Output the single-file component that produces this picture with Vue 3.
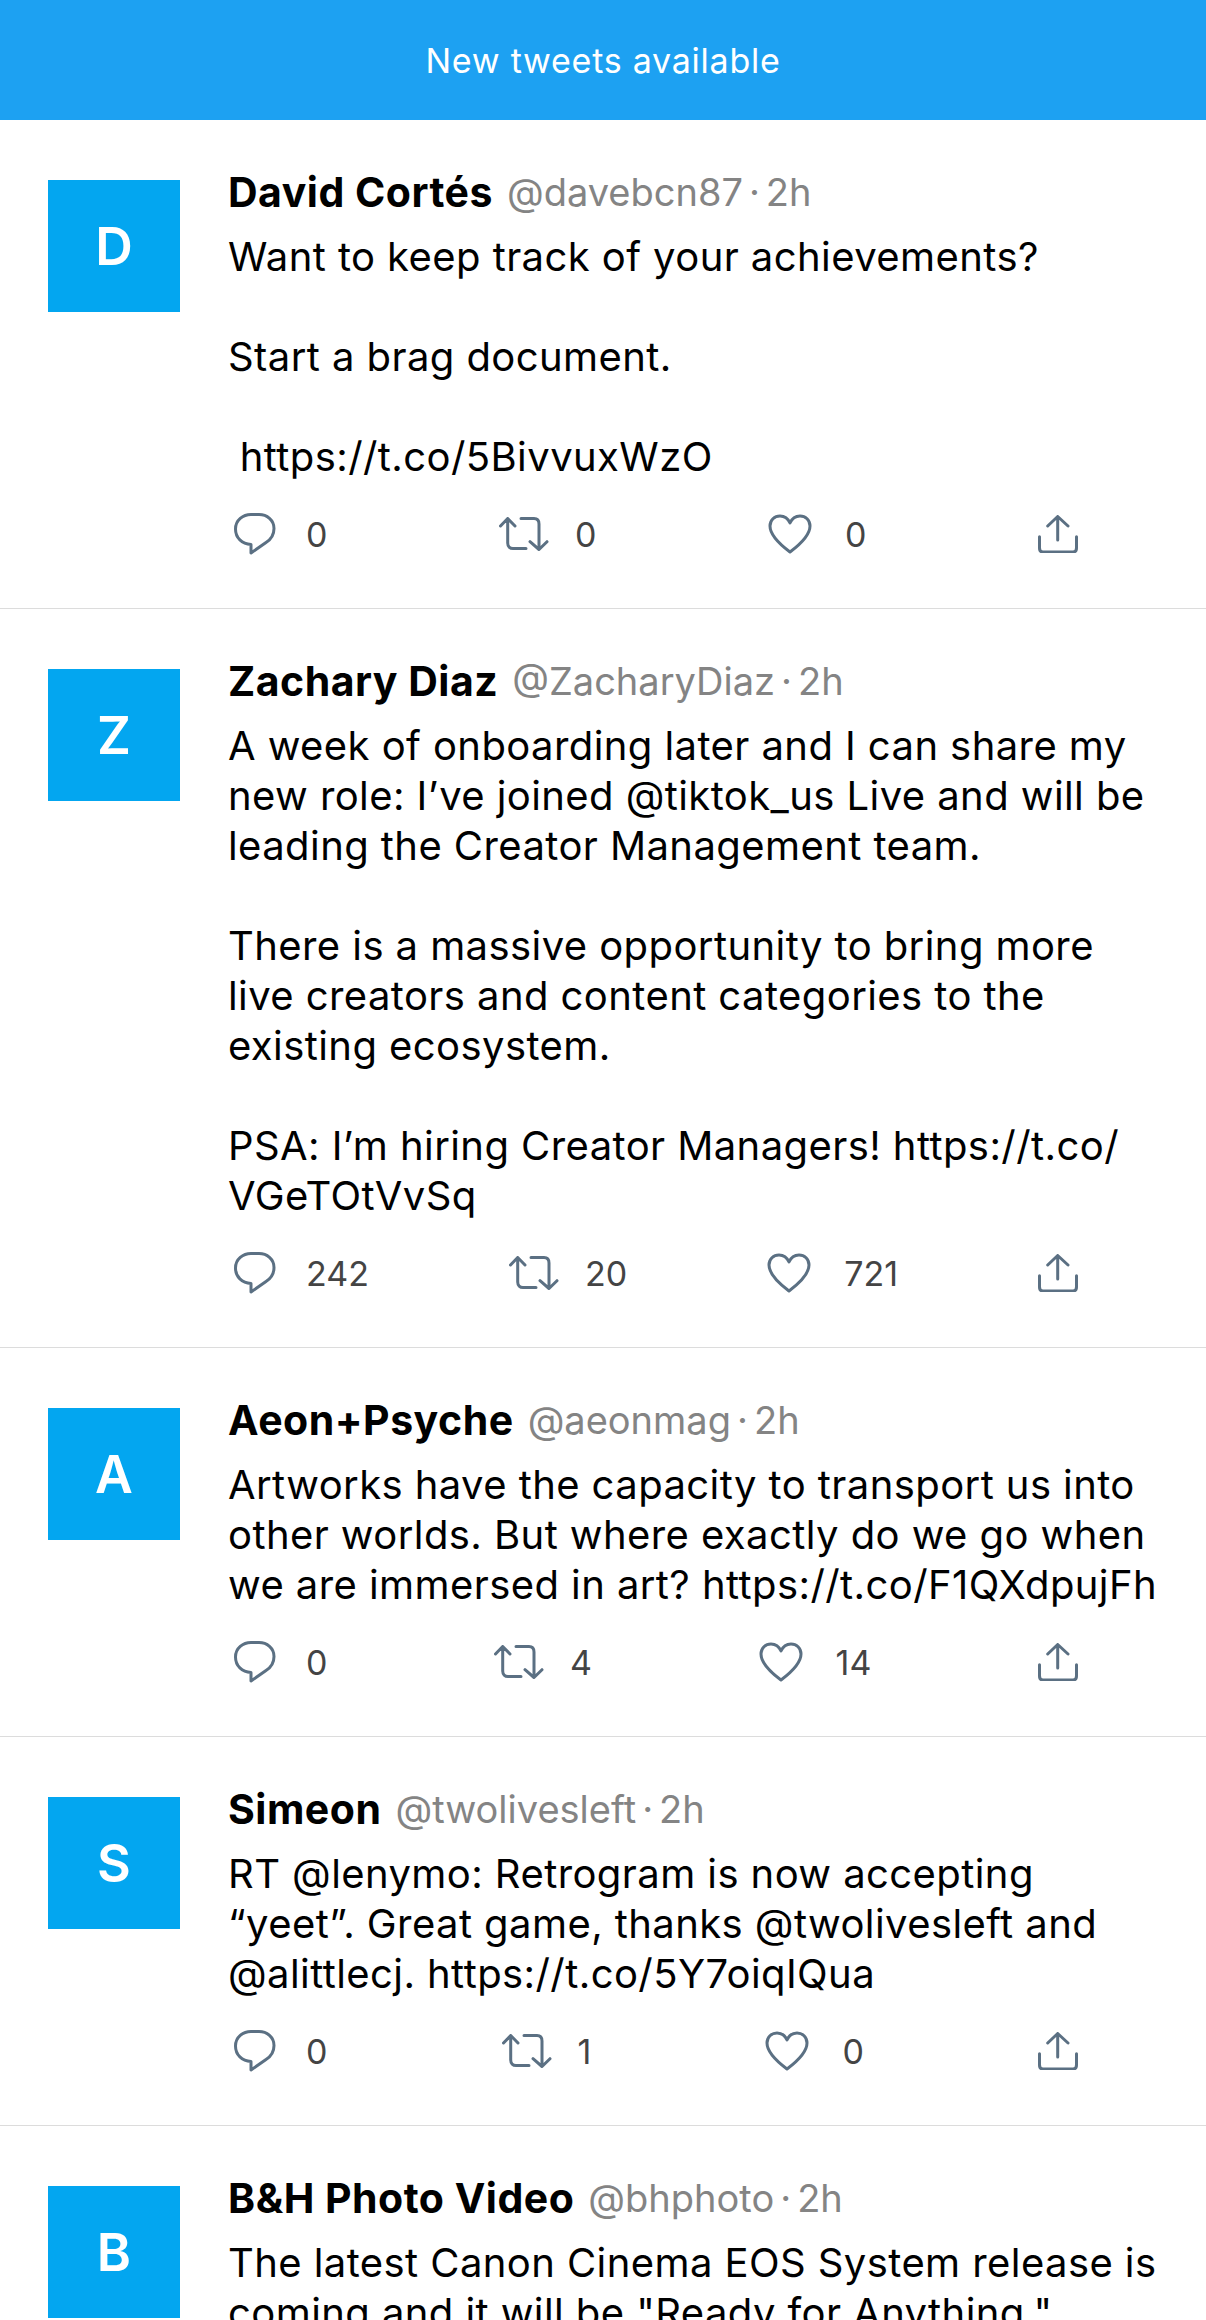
<template>
  <div class="page">
    <div class="banner">New tweets available</div>
    <div v-for="tweet in tweets" :key="tweet.handle" class="tweet">
      <div class="avatar">{{ tweet.name[0] }}</div>
      <div class="content">
        <div class="meta">
          <span class="name">{{ tweet.name }}</span>
          <span class="handle">@{{ tweet.handle }}</span>
          <span class="dot">·</span>
          <span class="time">2h</span>
        </div>
        <div class="body">{{ tweet.text }}</div>
        <div class="actions">
          <div class="action">
            <svg class="icon reply" width="42" height="42" viewBox="0 0 42 42">
              <path d="M17 31.5C8 31 1.5 25 1.5 16C1.5 7 9 1.5 17 1.5H25C33 1.5 40 7 40 15.5C40 22 36 27 32 29.5L17 40Z" />
            </svg>
            <span class="count">{{ tweet.replies }}</span>
          </div>
          <div class="action action-retweet">
            <svg class="icon retweet" width="50" height="34" viewBox="0 0 50 34">
              <path d="M1.5 9L8.7 1.5L16 9M8.7 2V26C8.7 29.5 11 31.5 14 31.5H27M22 1.5H35C38 1.5 40 3.5 40 7V32M31 24.7L40 32.5L48 24.7" />
            </svg>
            <span class="count">{{ tweet.retweets }}</span>
          </div>
          <div class="action action-like">
            <svg class="icon like" width="44" height="40" viewBox="0 0 44 40">
              <path d="M22 38C14 32 2 22 2 12C2 6 6.5 2 12 2C16.5 2 20 4.5 22 9C24 4.5 27.5 2 32 2C37.5 2 42 6 42 12C42 22 30 32 22 38Z" />
            </svg>
            <span class="count">{{ tweet.likes }}</span>
          </div>
          <div class="action">
            <svg class="icon share" width="40" height="38" viewBox="0 0 40 38">
              <path d="M9.7 11L19.7 1.5L30 11M19.7 2V25M1.5 21.7V33C1.5 35.5 3 37 5 37H35C37 37 38.5 35.5 38.5 33V21.7" />
            </svg>
          </div>
        </div>
      </div>
    </div>
  </div>
</template>

<script setup>
const tweets = [
  {
    name: 'David Cortés',
    handle: 'davebcn87',
    text: 'Want to keep track of your achievements?\n\nStart a brag document.\n\n https://t.co/5BivvuxWzO',
    replies: 0,
    retweets: 0,
    likes: 0,
  },
  {
    name: 'Zachary Diaz',
    handle: 'ZacharyDiaz',
    text: 'A week of onboarding later and I can share my new role: I’ve joined @tiktok_us Live and will be leading the Creator Management team.\n\nThere is a massive opportunity to bring more live creators and content categories to the existing ecosystem.\n\nPSA: I’m hiring Creator Managers! https://t.co/\nVGeTOtVvSq',
    replies: 242,
    retweets: 20,
    likes: 721,
  },
  {
    name: 'Aeon+Psyche',
    handle: 'aeonmag',
    text: 'Artworks have the capacity to transport us into other worlds. But where exactly do we go when we are immersed in art? https://t.co/F1QXdpujFh',
    replies: 0,
    retweets: 4,
    likes: 14,
  },
  {
    name: 'Simeon',
    handle: 'twolivesleft',
    text: 'RT @lenymo: Retrogram is now accepting “yeet”. Great game, thanks @twolivesleft and @alittlecj. https://t.co/5Y7oiqIQua',
    replies: 0,
    retweets: 1,
    likes: 0,
  },
  {
    name: 'B&H Photo Video',
    handle: 'bhphoto',
    text: 'The latest Canon Cinema EOS System release is coming and it will be "Ready for Anything."',
    replies: 0,
    retweets: 0,
    likes: 0,
  },
]
</script>

<style>
html,
body {
  margin: 0;
  background: #fff;
}
</style>

<style scoped>
.page {
  width: 1206px;
  height: 2320px;
  overflow: hidden;
  background: #fff;
  font-family: Inter, "Noto Sans", sans-serif;
}

.banner {
  height: 120px;
  display: flex;
  align-items: center;
  justify-content: center;
  background: #1da1f2;
  color: #fff;
  font-size: 34px;
  letter-spacing: 0.75px;
}

.tweet {
  display: flex;
  gap: 48px;
  padding: 48px 48px 52px;
  border-bottom: 1px solid #dcdcdc;
}

.avatar {
  flex: none;
  width: 132px;
  height: 132px;
  margin-top: 12px;
  display: flex;
  align-items: center;
  justify-content: center;
  background: #03a6f0;
  color: #fff;
  font-size: 52px;
  font-weight: 600;
}

.content {
  flex: 1;
  min-width: 0;
}

.meta {
  height: 48px;
  margin-bottom: 16px;
  display: flex;
  align-items: center;
  font-size: 38px;
  white-space: nowrap;
}

.name {
  color: #000;
  font-size: 41px;
  font-weight: 700;
  letter-spacing: 0.5px;
  margin-right: 14px;
}

.handle,
.time {
  color: #848484;
}

.dot {
  color: #848484;
  margin: 0 6px;
}

.body {
  color: #000;
  font-size: 40px;
  letter-spacing: 0.42px;
  line-height: 50px;
  white-space: pre-wrap;
}

.actions {
  height: 44px;
  margin-top: 30px;
  padding: 0 80px 0 6px;
  display: flex;
  align-items: center;
  justify-content: space-between;
}

.action {
  display: flex;
  align-items: center;
  gap: 30px;
}

.action-retweet {
  gap: 26px;
}

.action-like {
  gap: 33px;
}

.icon {
  display: block;
  fill: none;
  stroke: #5b7083;
  stroke-width: 3;
  stroke-linecap: round;
  stroke-linejoin: round;
}

.count {
  color: #444;
  font-size: 34px;
}
</style>
